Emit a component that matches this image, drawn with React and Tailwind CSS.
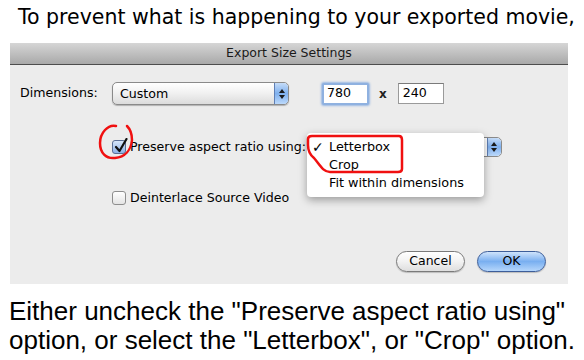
import React from 'react'

const ui = { fontFamily: '"DejaVu Sans", "Liberation Sans", sans-serif' }

function Checkbox({ checked }) {
  return (
    <span
      className={`relative flex h-[14px] w-[14px] items-center justify-center rounded-[3px] border ${
        checked ? 'border-[#5a6f95] bg-gradient-to-b from-[#d7e6fa] to-[#8db2e6]' : 'border-[#8e8e8e] bg-gradient-to-b from-white to-[#e4e4e4]'
      }`}
    >
      {checked && (
        <svg className="absolute -top-[3px] left-[1px]" width="14" height="15" viewBox="0 0 14 15">
          <path d="M2 9 L5.5 13 L12.5 1" fill="none" stroke="#111" strokeWidth="2.2" strokeLinecap="round" strokeLinejoin="round" />
        </svg>
      )}
    </span>
  )
}

function Arrows() {
  return (
    <span className="flex h-full w-[14px] flex-col items-center justify-center gap-[2px] rounded-r-[4px] border-l border-[#5f7fb5] bg-gradient-to-b from-[#c5dcf8] via-[#7fb0ee] to-[#bcd9fb]">
      <svg width="6" height="4" viewBox="0 0 6 4"><path d="M3 0 L6 4 L0 4 Z" fill="#1a1a1a" /></svg>
      <svg width="6" height="4" viewBox="0 0 6 4"><path d="M0 0 L6 0 L3 4 Z" fill="#1a1a1a" /></svg>
    </span>
  )
}

export default function App() {
  return (
    <div className="relative h-[360px] w-[584px] overflow-hidden bg-white text-black">
      {/* caption above */}
      <div className="pl-[18px] pt-[3px] text-[20.5px] leading-[28px] whitespace-nowrap" style={ui}>
        To prevent what is happening to your exported movie,
      </div>

      {/* dialog */}
      <div className="ml-[10px] mt-[12px] w-[558px]" style={ui}>
        <div className="flex h-[22px] items-center justify-center border-b border-[#4d4d4d] bg-gradient-to-b from-[#d6d6d6] to-[#a9a9a9] text-[12.5px] text-[#1a1a1a]">
          Export Size Settings
        </div>
        <div className="relative h-[219px] bg-[#ececec] text-[12.6px]">
          {/* dimensions row */}
          <div className="flex items-center pl-[10px] pt-[17px]">
            <span className="w-[92px]">Dimensions:</span>
            <div className="flex h-[23px] w-[177px] items-center overflow-hidden rounded-[5px] border border-[#8a8a8a] bg-gradient-to-b from-white via-[#f0f0f0] to-[#dcdcdc] shadow-[0_1px_1px_rgba(0,0,0,0.25)]">
              <span className="flex-1 pl-[7px] pt-[2px]">Custom</span>
              <Arrows />
            </div>
            <div className="ml-[33px] flex h-[22px] w-[47px] items-center rounded-[2px] border-2 border-[#8fb1e0] bg-white pl-[3px] shadow-[0_0_2px_1px_rgba(100,150,220,0.6)]">
              780
            </div>
            <span className="ml-[10px] font-bold text-[12px] text-[#222]">x</span>
            <div className="ml-[11px] flex h-[21px] w-[46px] items-center border border-[#9a9a9a] border-t-[#7a7a7a] bg-white pl-[4px]">
              240
            </div>
          </div>

          {/* preserve row */}
          <div className="mt-[32px] flex items-center pl-[102px]">
            <Checkbox checked />
            <span className="ml-[4px]">Preserve aspect ratio using:</span>
            <div className="ml-[12px] flex h-[20px] w-[184px] justify-end overflow-hidden rounded-[5px] border border-[#8a8a8a] bg-white">
              <Arrows />
            </div>
          </div>

          {/* deinterlace row */}
          <div className="mt-[32px] flex items-center pl-[102px]">
            <Checkbox />
            <span className="ml-[4px]">Deinterlace Source Video</span>
          </div>

          {/* buttons */}
          <div className="mt-[43px] flex justify-end gap-[12px] pr-[22px]">
            <button className="h-[21px] w-[69px] rounded-full border border-[#7a7a7a] bg-gradient-to-b from-white via-[#f2f2f2] to-[#dedede] text-[12.5px] shadow-[0_1px_1px_rgba(0,0,0,0.2)]">
              Cancel
            </button>
            <button className="h-[21px] w-[69px] rounded-full border border-[#3d5e9a] bg-gradient-to-b from-[#cfe3fb] via-[#79aff0] to-[#b5d6fb] text-[12.5px] shadow-[0_1px_1px_rgba(0,0,0,0.2)]">
              OK
            </button>
          </div>

          {/* open popup menu */}
          <div className="absolute left-[297px] top-[68px] w-[177px] rounded-[4px] bg-white py-[5px] text-[12.8px] shadow-[0_3px_8px_rgba(0,0,0,0.35)]">
            <div className="flex h-[18px] items-center"><span className="w-[22px] pl-[5px] text-[14px] font-bold">✓</span>Letterbox</div>
            <div className="flex h-[18px] items-center pl-[22px]">Crop</div>
            <div className="flex h-[18px] items-center pl-[22px]">Fit within dimensions</div>
          </div>

          {/* red annotations */}
          <svg className="absolute left-0 top-0" width="558" height="219" viewBox="0 0 558 219">
            <path
              d="M106 61 C98 59 90 68 90 78 C90 88 96 94 105 93 C115 92 121 85 122 75 C122 69 120 64 117 61"
              fill="none"
              stroke="#f01010"
              strokeWidth="2.5"
              strokeLinecap="round"
            />
            <path
              d="M302 71 L389 71 C392 71 392 73 392 75 L392 104 C392 107 390 107 388 107 L320 107 C313 107 310 100 304 93 C299 89 298 85 298 80 L298 74 C298 72 300 71 302 71"
              fill="none"
              stroke="#f01010"
              strokeWidth="2.5"
              strokeLinejoin="round"
            />
          </svg>
        </div>
      </div>

      {/* caption below */}
      <div className="pl-[9px] pt-[13px] text-[26px] leading-[29px] whitespace-nowrap" style={{ fontFamily: '"Liberation Sans", Arial, sans-serif' }}>
        <div>Either uncheck the "Preserve aspect ratio using"</div>
        <div>option, or select the "Letterbox", or "Crop" option.</div>
      </div>
    </div>
  )
}
